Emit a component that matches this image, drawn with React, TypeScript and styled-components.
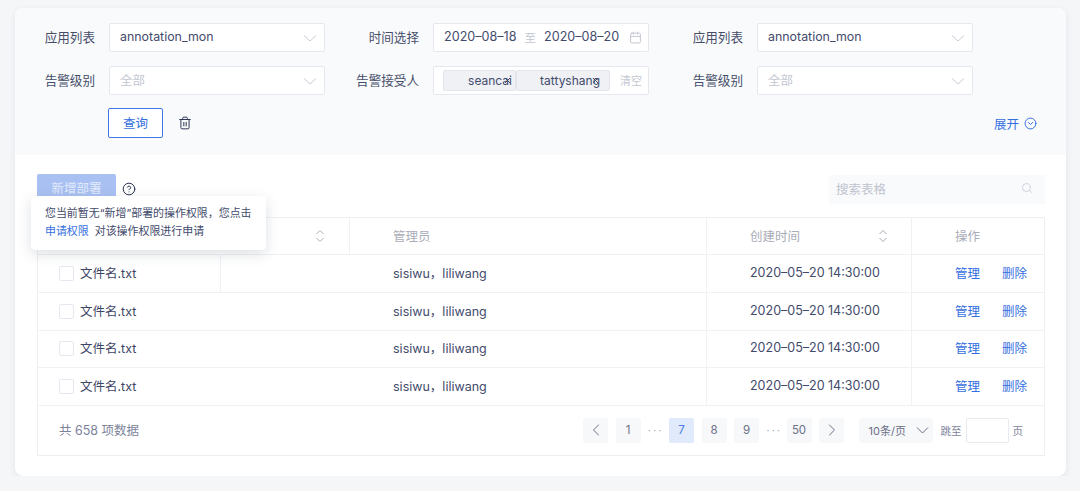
import React from "react";
import styled, { createGlobalStyle } from "styled-components";
import { Calendar, ChevronLeft, ChevronRight, CircleChevronDown, CircleHelp, Search, Trash2, X } from "lucide-react";

const Global = createGlobalStyle`
  html, body { margin: 0; padding: 0; background: #f5f6f8; }
  body { font-family: Inter, "Noto Sans CJK SC", sans-serif; font-size: 13px; color: #3d4566; }
  * { box-sizing: border-box; }
`;

const Card = styled.main`
  position: relative;
  width: 1051px;
  height: 468px;
  margin: 8px 0 0 15px;
  background: #fff;
  border-radius: 8px;
  box-shadow: 0 2px 6px rgba(60, 70, 110, 0.1);
  overflow: hidden;
`;
const Filters = styled.section`
  height: 147px;
  padding-top: 15px;
  background: #f9fafc;
`;
const FieldGrid = styled.div`
  display: grid;
  grid-template-columns: repeat(3, 310px);
  column-gap: 14px;
  row-gap: 14px;
`;
const Field = styled.div`
  display: grid;
  grid-template-columns: 80px 216px;
  column-gap: 14px;
  align-items: center;
  height: 29px;
`;
const Label = styled.label`
  padding-bottom: 2px;
  text-align: right;
  color: #474e6a;
  font-size: 12.6px;
`;
const Control = styled.div`
  display: flex;
  align-items: center;
  height: 29px;
  padding: 0 5px 0 10px;
  background: #fff;
  border: 1px solid #e6e8ef;
  border-radius: 2px;
  font-size: 12.4px;
`;
const Value = styled.span<{ $muted?: boolean }>`
  flex: 1;
  padding-bottom: 2px;
  color: ${(p) => (p.$muted ? "#c3c7d1" : "#434b6c")};
`;
const DateText = styled.span<{ $muted?: boolean }>`
  padding-bottom: 2px;
  color: ${(p) => (p.$muted ? "#c3c7d1" : "#434b6c")};
  margin-right: ${(p) => (p.$muted ? "8px" : "0")};
  margin-left: ${(p) => (p.$muted ? "8px" : "0")};
  font-size: ${(p) => (p.$muted ? "11.5px" : "12.6px")};
  white-space: nowrap;
`;
const CalendarSlot = styled.span`
  display: flex;
  margin-left: auto;
  padding-right: 1px;
  color: #c3c7d1;
`;
const TagControl = styled(Control)`
  padding: 0 0 0 9px;
`;
const Tag = styled.span<{ $w: number; $pad: number }>`
  display: flex;
  align-items: center;
  justify-content: flex-end;
  width: ${(p) => p.$w}px;
  height: 21px;
  padding-right: ${(p) => p.$pad}px;
  background: #eff1f5;
  border: 1px solid #e4e6ed;
  border-radius: 2px;
  color: #434b6c;
  font-size: 12px;
`;
const TagClose = styled.span`
  display: flex;
  margin-left: -9px;
  color: #434b6c;
`;
const Clear = styled.span`
  margin-left: 10px;
  padding-bottom: 1px;
  color: #c3c7d1;
  font-size: 11px;
  white-space: nowrap;
`;
const Actions = styled.div`
  display: flex;
  align-items: center;
  height: 30px;
  margin-top: 13px;
  padding: 0 29px 0 93px;
`;
const QueryButton = styled.button`
  width: 55px;
  height: 30px;
  padding: 0 0 2px;
  margin-right: 15px;
  background: #fff;
  border: 1px solid #3f77e4;
  border-radius: 2px;
  color: #3570e0;
  font: inherit;
  font-size: 12.5px;
`;
const IconSlot = styled.span`
  display: flex;
  color: #2f3654;
`;
const Expand = styled.button`
  display: flex;
  align-items: center;
  gap: 5px;
  margin-left: auto;
  padding: 0;
  background: none;
  border: 0;
  color: #3570e0;
  font: inherit;
  font-size: 12.5px;
`;
const Content = styled.section`
  padding: 19px 21px 0 22px;
`;
const Toolbar = styled.div`
  display: flex;
  align-items: center;
  height: 30px;
  margin-bottom: 13px;
`;
const AddButton = styled.button`
  width: 79px;
  height: 30px;
  padding: 0 0 3px;
  margin-right: 6px;
  background: #a9c1f2;
  border: 0;
  border-radius: 2px;
  color: #e2eafb;
  font: inherit;
  font-size: 12.5px;
`;
const SearchBox = styled.div`
  display: flex;
  align-items: center;
  justify-content: space-between;
  width: 216px;
  height: 29px;
  margin-left: auto;
  padding: 0 12px 2px 7px;
  background: #f9fafc;
  color: #bfc3ce;
  font-size: 12.5px;
`;
const Table = styled.div`
  border: 1px solid #edeff3;
  height: 239px;
`;
const Row = styled.div<{ $h: number }>`
  display: grid;
  grid-template-columns: 312px 357px 205px 132px;
  height: ${(p) => p.$h}px;
  border-bottom: 1px solid #f0f1f5;
`;
const Cell = styled.div`
  display: flex;
  align-items: center;
  padding: 0 23px 3px 43px;
  border-right: 1px solid #f0f1f5;
  color: #434b6c;
  font-size: 12.5px;
  white-space: nowrap;
  &:last-child { border-right: 0; }
`;
const HeadCell = styled(Cell)<{ $inset?: number }>`
  justify-content: space-between;
  padding: 0 ${(p) => p.$inset ?? 23}px 1px 43px;
  color: #a9adb8;
`;
const NameCell = styled.div<{ $w?: number }>`
  display: flex;
  align-items: center;
  gap: 6px;
  width: ${(p) => (p.$w ? `${p.$w}px` : "auto")};
  padding: 0 0 3px 21px;
  border-right: ${(p) => (p.$w ? "1px solid #f0f1f5" : "0")};
  color: #3d4566;
  font-size: 12.5px;
`;
const Box = styled.span`
  width: 15px;
  height: 15px;
  margin-top: 2px;
  background: #fff;
  border: 1px solid #e6e8ef;
  border-radius: 2px;
`;
const Ops = styled.div`
  display: flex;
  align-items: center;
  gap: 22px;
`;
const Link = styled.a`
  color: #3570e0;
  font-size: 12.5px;
`;
const Footer = styled.div`
  display: flex;
  align-items: center;
  height: 49px;
  padding: 0 21px 1px;
`;
const Total = styled.span`
  padding-bottom: 1px;
  color: #7d839b;
  font-size: 12.5px;
`;
const Pager = styled.div`
  display: flex;
  align-items: center;
  margin-left: auto;
`;
const Page = styled.span<{ $active?: boolean }>`
  display: flex;
  align-items: center;
  justify-content: center;
  width: 25px;
  height: 25px;
  margin-right: 7.5px;
  background: ${(p) => (p.$active ? "#e1eafa" : "#f7f8fa")};
  border-radius: 2px;
  color: ${(p) => (p.$active ? "#4a7de4" : "#6b7186")};
  font-size: 11.5px;
`;
const Dots = styled.span<{ $w: number }>`
  width: ${(p) => p.$w}px;
  color: #a0a5b3;
  font-size: 10px;
  letter-spacing: 2.4px;
`;
const SizeSelect = styled.div`
  display: flex;
  align-items: center;
  justify-content: space-between;
  width: 74px;
  height: 25px;
  margin: 0 8px 0 7px;
  padding: 0 2px 0 10px;
  background: #f7f8fa;
  border-radius: 2px;
  color: #6b7186;
  font-size: 11px;
  white-space: nowrap;
`;
const PagerText = styled.span`
  color: #7d839b;
  font-size: 10.5px;
  white-space: nowrap;
`;
const JumpInput = styled.span`
  width: 43px;
  height: 25px;
  margin: 0 4px;
  border: 1px solid #e8eaf0;
  border-radius: 2px;
  background: #fff;
`;
const Tooltip = styled.div`
  position: absolute;
  left: 16px;
  top: 188px;
  width: 235px;
  height: 54px;
  padding: 8px 14px;
  background: #fff;
  border-radius: 4px;
  box-shadow: 0 4px 14px rgba(50, 60, 90, 0.16);
  color: #434b6c;
  font-size: 10.95px;
  line-height: 18px;
  white-space: nowrap;
`;
const TipLink = styled.a`
  margin-right: 6px;
  color: #3570e0;
`;

const Chevron = ({ color = "#c9ccd6", w = 12 }: { color?: string; w?: number }) => (
  <svg width={w + 6} height="12" viewBox={`0 0 ${w + 6} 12`} fill="none">
    <path d={`M3 3.5 L${3 + w / 2} 9 L${3 + w} 3.5`} stroke={color} strokeWidth="1" />
  </svg>
);
const Sort = () => (
  <svg width="10" height="14" viewBox="0 0 10 14" fill="none" stroke="#a9adb8" strokeWidth="1">
    <path d="M1.5 5 L5 1.5 L8.5 5" />
    <path d="M1.5 9 L5 12.5 L8.5 9" />
  </svg>
);

const SelectField = ({ label, value, muted }: { label: string; value: string; muted?: boolean }) => (
  <Field>
    <Label>{label}</Label>
    <Control>
      <Value $muted={muted}>{value}</Value>
      <Chevron />
    </Control>
  </Field>
);

const rowHeights = [38, 38, 37, 38];

export default function App() {
  return (
    <>
      <Global />
      <Card>
        <Filters>
          <FieldGrid>
            <SelectField label="应用列表" value="annotation_mon" />
            <Field>
              <Label>时间选择</Label>
              <Control>
                <DateText>2020–08–18</DateText>
                <DateText $muted>至</DateText>
                <DateText>2020–08–20</DateText>
                <CalendarSlot><Calendar size={13} strokeWidth={1} absoluteStrokeWidth /></CalendarSlot>
              </Control>
            </Field>
            <SelectField label="应用列表" value="annotation_mon" />
            <SelectField label="告警级别" value="全部" muted />
            <Field>
              <Label>告警接受人</Label>
              <TagControl>
                <Tag $w={73} $pad={3}>seancai<TagClose><X size={9} strokeWidth={1} absoluteStrokeWidth /></TagClose></Tag>
                <Tag $w={94} $pad={9}>tattyshang<TagClose><X size={9} strokeWidth={1} absoluteStrokeWidth /></TagClose></Tag>
                <Clear>清空</Clear>
              </TagControl>
            </Field>
            <SelectField label="告警级别" value="全部" muted />
          </FieldGrid>
          <Actions>
            <QueryButton>查询</QueryButton>
            <IconSlot><Trash2 size={14} strokeWidth={1} absoluteStrokeWidth /></IconSlot>
            <Expand>展开 <CircleChevronDown size={13} strokeWidth={1} absoluteStrokeWidth /></Expand>
          </Actions>
        </Filters>
        <Content>
          <Toolbar>
            <AddButton>新增部署</AddButton>
            <IconSlot><CircleHelp size={14} strokeWidth={1} absoluteStrokeWidth /></IconSlot>
            <SearchBox>搜索表格<Search size={12} strokeWidth={1} absoluteStrokeWidth color="#cfd3dc" /></SearchBox>
          </Toolbar>
          <Table>
            <Row $h={37}>
              <HeadCell $inset={24}><span /><Sort /></HeadCell>
              <HeadCell>管理员</HeadCell>
              <HeadCell>创建时间<Sort /></HeadCell>
              <HeadCell>操作</HeadCell>
            </Row>
            {rowHeights.map((h, i) => (
              <Row key={i} $h={h}>
                <NameCell $w={i === 0 ? 183 : undefined}>
                  <Box />文件名.txt
                </NameCell>
                <Cell>sisiwu，liliwang</Cell>
                <Cell>2020–05–20 14:30:00</Cell>
                <Cell>
                  <Ops>
                    <Link>管理</Link>
                    <Link>删除</Link>
                  </Ops>
                </Cell>
              </Row>
            ))}
            <Footer>
              <Total>共 658 项数据</Total>
              <Pager>
                <Page><ChevronLeft size={20} strokeWidth={1} absoluteStrokeWidth /></Page>
                <Page>1</Page>
                <Dots $w={21}>···</Dots>
                <Page $active>7</Page>
                <Page>8</Page>
                <Page>9</Page>
                <Dots $w={20}>···</Dots>
                <Page>50</Page>
                <Page><ChevronRight size={20} strokeWidth={1} absoluteStrokeWidth /></Page>
                <SizeSelect>10条/页<Chevron color="#6b7186" w={11} /></SizeSelect>
                <PagerText>跳至</PagerText>
                <JumpInput />
                <PagerText>页</PagerText>
              </Pager>
            </Footer>
          </Table>
        </Content>
        <Tooltip>
          您当前暂无“新增”部署的操作权限，您点击<br />
          <TipLink>申请权限</TipLink>对该操作权限进行申请
        </Tooltip>
      </Card>
    </>
  );
}
